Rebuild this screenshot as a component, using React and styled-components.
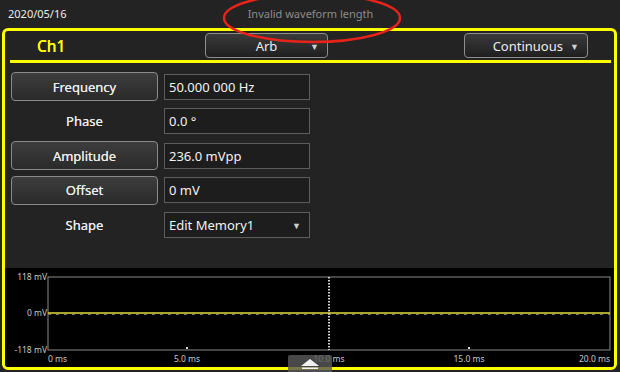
import React from 'react';
import styled, { createGlobalStyle } from 'styled-components';

const GlobalStyle = createGlobalStyle`
    html, body {
        margin: 0;
        padding: 0;
        background: #232323;
    }
    body {
        font-family: "Noto Sans", "Open Sans", sans-serif;
        color: #e8e8e8;
    }
`;

const Screen = styled.div`
    position: relative;
    width: 620px;
    height: 372px;
    display: flex;
    flex-direction: column;
    background: #232323;
    overflow: hidden;
`;

const TopBar = styled.div`
    height: 28px;
    display: grid;
    grid-template-columns: 1fr auto 1fr;
    align-items: center;
    padding: 0 7px 2px 8px;
    box-sizing: border-box;
    font-size: 11px;
`;

const DateText = styled.span`
    color: #ececec;
`;

const Message = styled.span`
    color: #8c8c8c;
`;

/* red annotation ring drawn over the status message */
const Annotation = styled.svg`
    position: absolute;
    left: 218px;
    top: -12px;
    width: 190px;
    height: 60px;
    pointer-events: none;
`;

const ChannelPanel = styled.div`
    flex: 1;
    margin: 0 3px 2px 2px;
    border: 3px solid #ffff00;
    border-radius: 6px;
    display: flex;
    flex-direction: column;
    overflow: hidden;
`;

const Header = styled.div`
    height: 29px;
    display: grid;
    grid-template-columns: 200px 123px 1fr 124px;
    align-items: center;
    padding-right: 26px;
`;

const ChannelLabel = styled.span`
    padding-left: 32px;
    color: #ffff00;
    font-size: 15.5px;
    font-weight: 500;
    text-shadow: 0 0 0.4px #ffff00;
`;

const DropButton = styled.div`
    grid-column: ${(p) => p.col};
    height: 25px;
    box-sizing: border-box;
    border: 1.5px solid #8e8e8e;
    border-radius: 4px;
    background: linear-gradient(#3a3a3a, #1f1f1f);
    display: flex;
    align-items: center;
    justify-content: ${(p) => (p.centered ? 'center' : 'flex-end')};
    position: relative;
    padding-right: ${(p) => (p.centered ? '0' : '24px')};
    font-size: 13px;
    color: #ececec;
`;

const Caret = styled.span`
    position: absolute;
    right: 8px;
    top: 50%;
    transform: translateY(-50%);
    font-size: 9px;
    color: #cfcfcf;
`;

const Divider = styled.div`
    height: 3px;
    margin: 0 3px 0 5px;
    background: #ffff00;
`;

const Form = styled.div`
    flex: 1;
    padding: 9px 0 0 6px;
    display: grid;
    grid-template-columns: 147px 146px;
    grid-auto-rows: 29px;
    column-gap: 6px;
    row-gap: 5.5px;
    align-content: start;
`;

const ParamButton = styled.div`
    box-sizing: border-box;
    border: 1.5px solid ${(p) => (p.plain ? 'transparent' : '#8a8a8a')};
    border-radius: 4px;
    background: ${(p) => (p.plain ? 'none' : 'linear-gradient(#3d3d3d, #2a2a2a)')};
    display: flex;
    align-items: center;
    justify-content: center;
    font-size: 13px;
    color: #ececec;
    text-shadow: 0 0 0.4px #ececec;
`;

const ValueBox = styled.div`
    align-self: center;
    height: 26px;
    box-sizing: border-box;
    border: 1px solid #5c5c5c;
    background: #1d1d1d;
    display: flex;
    align-items: center;
    padding-left: 4px;
    position: relative;
    font-size: 13px;
    color: #f2f2f2;
`;

const PlotArea = styled.div`
    height: 99px;
    background: #000;
`;

const PlotSvg = styled.svg`
    display: block;
    width: 100%;
    height: 100%;
    font-family: "Noto Sans", "Open Sans", sans-serif;
`;

const PullTab = styled.div`
    position: absolute;
    left: 288px;
    bottom: 0;
    width: 44px;
    height: 17px;
    background: rgba(88, 88, 88, 0.82);
    border-radius: 2px 2px 0 0;
    display: flex;
    align-items: center;
    justify-content: center;
`;

const params = [
    { label: 'Frequency', value: '50.000 000 Hz' },
    { label: 'Phase', value: '0.0 °', plain: true },
    { label: 'Amplitude', value: '236.0 mVpp' },
    { label: 'Offset', value: '0 mV' },
    { label: 'Shape', value: 'Edit Memory1', plain: true, menu: true },
];

const xLabels = [
    { x: 43, t: '0 ms', anchor: 'start' },
    { x: 182, t: '5.0 ms', anchor: 'middle' },
    { x: 324, t: '10.0 ms', anchor: 'middle' },
    { x: 464, t: '15.0 ms', anchor: 'middle' },
    { x: 605, t: '20.0 ms', anchor: 'end' },
];

const Plot = () => (
    <PlotArea>
        <PlotSvg viewBox="0 0 609 99">
            <rect x="43" y="9" width="562" height="73" fill="none" stroke="#8a8a8a" strokeWidth="1" />
            <line x1="43" y1="45" x2="605" y2="45" stroke="#e6dc3c" strokeWidth="1.5" />
            <line x1="43" y1="46.5" x2="605" y2="46.5" stroke="#7a7a50" strokeWidth="1" strokeDasharray="3 5" />
            <line x1="324" y1="9" x2="324" y2="82" stroke="#d0d0d0" strokeWidth="2" strokeDasharray="1.5 1.5" />
            <rect x="181" y="79" width="2" height="2" fill="#d0d0d0" />
            <rect x="463" y="79" width="2" height="2" fill="#d0d0d0" />
            <g fill="#c8c8c8" fontSize="8.5">
                <text x="42" y="12" textAnchor="end">118 mV</text>
                <text x="42" y="48" textAnchor="end">0 mV</text>
                <text x="42" y="85" textAnchor="end">-118 mV</text>
                {xLabels.map((l) => (
                    <text key={l.t} x={l.x} y="94" textAnchor={l.anchor}>{l.t}</text>
                ))}
            </g>
        </PlotSvg>
    </PlotArea>
);

export default function App() {
    return (
        <Screen>
            <GlobalStyle />
            <TopBar>
                <DateText>2020/05/16</DateText>
                <Message>Invalid waveform length</Message>
                <span />
            </TopBar>

            <ChannelPanel>
                <Header>
                    <ChannelLabel>Ch1</ChannelLabel>
                    <DropButton col={2} centered>
                        Arb
                        <Caret>▼</Caret>
                    </DropButton>
                    <DropButton col={4}>
                        Continuous
                        <Caret>▼</Caret>
                    </DropButton>
                </Header>
                <Divider />
                <Form>
                    {params.map((p) => (
                        <React.Fragment key={p.label}>
                            <ParamButton plain={p.plain}>{p.label}</ParamButton>
                            <ValueBox>
                                {p.value}
                                {p.menu && <Caret>▼</Caret>}
                            </ValueBox>
                        </React.Fragment>
                    ))}
                </Form>
                <Plot />
            </ChannelPanel>

            <PullTab>
                <svg width="22" height="12" viewBox="0 0 22 12">
                    <path d="M11 1 L20 8 L2 8 Z" fill="#f2f2f2" />
                    <rect x="3" y="9.5" width="16" height="1.5" fill="#f2f2f2" />
                </svg>
            </PullTab>

            <Annotation viewBox="0 0 190 60">
                <ellipse cx="94" cy="30" rx="88" ry="24" fill="none" stroke="#e8231a" strokeWidth="2.5" />
            </Annotation>
        </Screen>
    );
}
